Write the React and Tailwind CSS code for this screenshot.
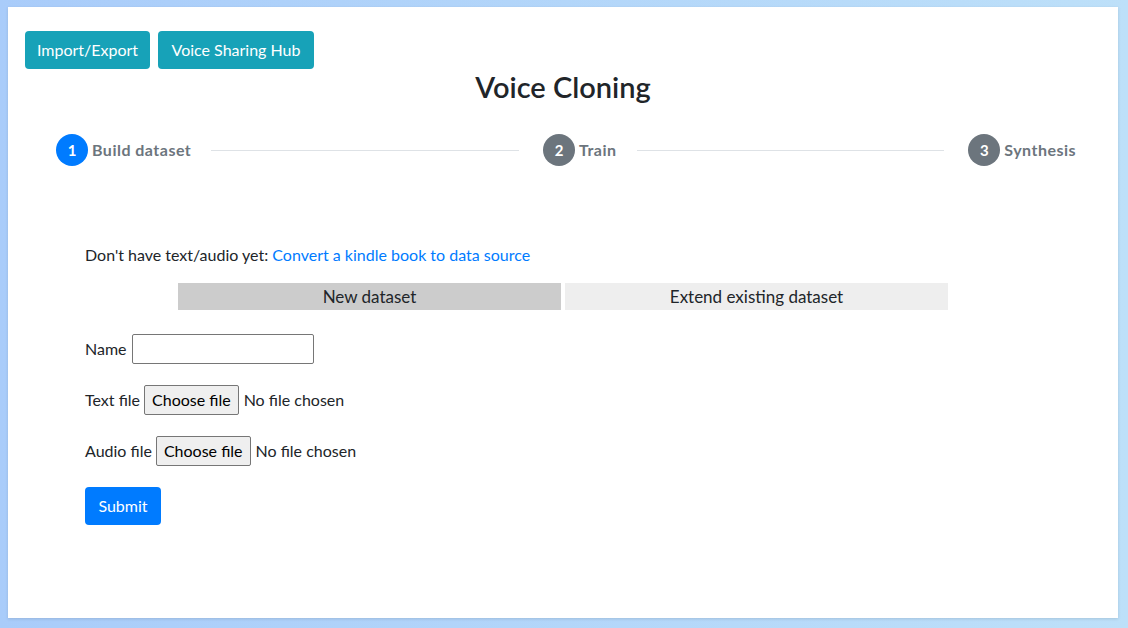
import React from "react";

const font = { fontFamily: "Lato, 'Noto Sans', 'Liberation Sans', sans-serif" };

// Step indicator item
function Step({ num, label, active }) {
  return (
    <div className="flex items-center shrink-0">
      <div
        className={`flex h-8 w-8 items-center justify-center rounded-full text-[15px] font-bold text-white ${
          active ? "bg-[#007bff]" : "bg-[#6c757d]"
        }`}
      >
        {num}
      </div>
      <span className="ml-1 text-[16px] font-bold tracking-[0.03em] text-[#6c757d]">{label}</span>
    </div>
  );
}

function Connector() {
  return <div className="ml-[20px] mr-[24px] h-px flex-1 bg-[#dee2e6]" />;
}

// Fake native file input
function FileField({ label }) {
  return (
    <div className="mb-[21px] flex h-[30px] items-center">
      <span className="mr-1">{label}</span>
      <button className="h-[30px] rounded-[2px] border border-[#767676] bg-[#efefef] px-[7px] text-[16px] text-black">
        Choose file
      </button>
      <span className="ml-[5px]">No file chosen</span>
    </div>
  );
}

export default function App() {
  return (
    <div
      className="min-h-[628px] w-full bg-gradient-to-r from-[#a9ccfa] to-[#bde0f9] pb-[10px] pl-[8px] pr-[10px] pt-[7px] text-[#212529]"
      style={font}
    >
      <div className="h-[611px] bg-white px-[17px] pt-[24px] shadow-[0_1px_3px_rgba(0,0,0,0.12)]">
        {/* Top buttons */}
        <div className="flex gap-2">
          <button className="h-[38px] w-[125px] rounded bg-[#17a2b8] text-[16px] text-white">
            Import/Export
          </button>
          <button className="h-[38px] w-[156px] rounded bg-[#17a2b8] text-[16px] text-white">
            Voice Sharing Hub
          </button>
        </div>

        <h3 className="mt-[1px] text-center text-[29px] font-semibold leading-[34px]">Voice Cloning</h3>

        {/* Stepper */}
        <div className="mt-[30px] flex items-center pl-[31px] pr-[25px]">
          <Step num="1" label="Build dataset" active />
          <Connector />
          <Step num="2" label="Train" />
          <Connector />
          <Step num="3" label="Synthesis" />
        </div>

        {/* Body */}
        <div className="px-[60px] pt-[77px] text-[16px]">
          <p className="leading-6">
            Don't have text/audio yet:{" "}
            <a className="text-[#007bff]" href="#">
              Convert a kindle book to data source
            </a>
          </p>

          <div className="mt-4 flex justify-center gap-1 text-[17px]">
            <div className="flex h-[27px] w-[383px] items-center justify-center bg-[#cccccc]">
              New dataset
            </div>
            <div className="flex h-[27px] w-[383px] items-center justify-center bg-[#eeeeee]">
              Extend existing dataset
            </div>
          </div>

          <div className="mt-6">
            <div className="mb-[21px] flex h-[30px] items-center">
              <span className="mr-[5px]">Name</span>
              <input className="h-[30px] w-[182px] rounded-[2px] border border-[#767676] px-1" />
            </div>
            <FileField label="Text file" />
            <FileField label="Audio file" />
            <button className="h-[38px] w-[76px] rounded bg-[#007bff] text-white">Submit</button>
          </div>
        </div>
      </div>
    </div>
  );
}
